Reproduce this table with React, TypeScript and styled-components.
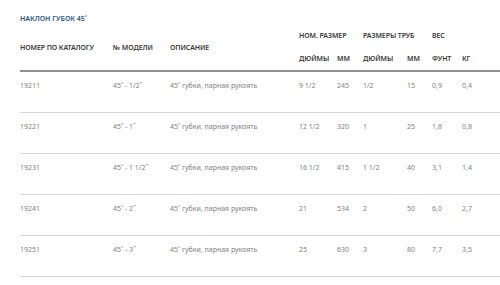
import React from "react";
import styled, { createGlobalStyle } from "styled-components";

const GlobalStyle = createGlobalStyle`
  html, body {
    margin: 0;
    padding: 0;
    background: #ffffff;
  }
  body {
    font-family: "Noto Sans", "Open Sans", sans-serif;
    -webkit-font-smoothing: antialiased;
  }
`;

const Section = styled.div`
  padding: 14px 0 0 20px;
`;

const Title = styled.h3`
  margin: 0 0 1px;
  font-size: 7px;
  line-height: 9px;
  font-weight: 600;
  color: #2e5787;
  text-transform: uppercase;
`;

const Table = styled.table`
  border-collapse: separate;
  border-spacing: 0;
  table-layout: fixed;
  width: 480px;
`;

const Th = styled.th<{ $h?: number; $thick?: boolean }>`
  height: ${(p) => p.$h ?? 22}px;
  padding: 0;
  font-size: 7px;
  line-height: 9px;
  font-weight: 600;
  letter-spacing: -0.1px;
  color: #3a3a3a;
  text-align: left;
  vertical-align: middle;
  white-space: nowrap;
  border-bottom: ${(p) => (p.$thick ? "2px solid #8f8f8f" : "none")};
`;

const Td = styled.td`
  height: 31px;
  padding: 9px 0 0;
  font-size: 7px;
  line-height: 9px;
  color: #808080;
  text-align: left;
  vertical-align: top;
  white-space: nowrap;
  border-bottom: 1px solid #d6d6d6;
`;

const widths = [93, 57, 129, 38, 26, 44, 25, 30, 38];

type Row = [string, string, string, string, string, string, string, string, string];

const rows: Row[] = [
  ["19211", "45˚ - 1/2˝", "45˚ губки, парная рукоять", "9 1/2", "245", "1/2", "15", "0,9", "0,4"],
  ["19221", "45˚ - 1˝", "45˚ губки, парная рукоять", "12 1/2", "320", "1", "25", "1,8", "0,8"],
  ["19231", "45˚ - 1 1/2˝", "45˚ губки, парная рукоять", "16 1/2", "415", "1 1/2", "40", "3,1", "1,4"],
  ["19241", "45˚ - 2˝", "45˚ губки, парная рукоять", "21", "534", "2", "50", "6,0", "2,7"],
  ["19251", "45˚ - 3˝", "45˚ губки, парная рукоять", "25", "630", "3", "80", "7,7", "3,5"],
];

export default function App() {
  return (
    <>
      <GlobalStyle />
      <Section>
        <Title>Наклон губок 45˚</Title>
        <Table>
          <colgroup>
            {widths.map((w, i) => (
              <col key={i} style={{ width: w }} />
            ))}
          </colgroup>
          <thead>
            <tr>
              <Th rowSpan={2} $thick>НОМЕР ПО КАТАЛОГУ</Th>
              <Th rowSpan={2} $thick>№ МОДЕЛИ</Th>
              <Th rowSpan={2} $thick>ОПИСАНИЕ</Th>
              <Th colSpan={2}>НОМ. РАЗМЕР</Th>
              <Th colSpan={2}>РАЗМЕРЫ ТРУБ</Th>
              <Th colSpan={2}>ВЕС</Th>
            </tr>
            <tr>
              <Th $h={24} $thick>ДЮЙМЫ</Th>
              <Th $h={24} $thick>ММ</Th>
              <Th $h={24} $thick>ДЮЙМЫ</Th>
              <Th $h={24} $thick>ММ</Th>
              <Th $h={24} $thick>ФУНТ</Th>
              <Th $h={24} $thick>КГ</Th>
            </tr>
          </thead>
          <tbody>
            {rows.map((r) => (
              <tr key={r[0]}>
                {r.map((c, i) => (
                  <Td key={i}>{c}</Td>
                ))}
              </tr>
            ))}
          </tbody>
        </Table>
      </Section>
    </>
  );
}
